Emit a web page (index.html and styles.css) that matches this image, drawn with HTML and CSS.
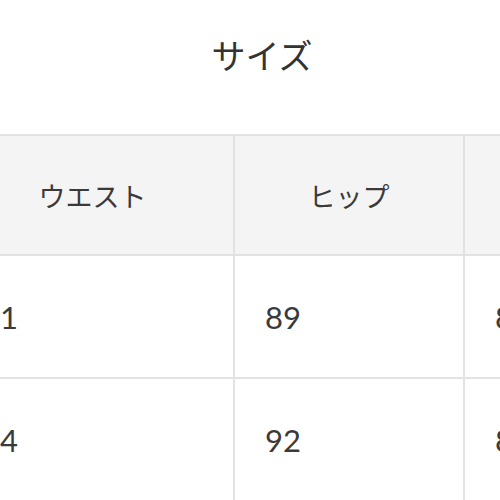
FILE: index.html
```html
<!DOCTYPE html>
<html lang="ja">
<head>
<meta charset="utf-8">
<link rel="stylesheet" href="styles.css">
</head>
<body>
<div class="page">
  <h2 class="title">サイズ</h2>
  <div class="table">
    <div class="cell head">ウエスト</div>
    <div class="cell head">ヒップ</div>
    <div class="cell head">股下</div>
    <div class="cell">71</div>
    <div class="cell">89</div>
    <div class="cell">80</div>
    <div class="cell">74</div>
    <div class="cell">92</div>
    <div class="cell">81</div>
  </div>
</div>
</body>
</html>
```
FILE: styles.css
```css
html, body {
  margin: 0;
  padding: 0;
  background: #fff;
}
body {
  width: 500px;
  height: 500px;
  overflow: hidden;
  font-family: Lato, "Noto Sans CJK JP", sans-serif;
  color: #3a3a3a;
}
.page {
  display: flex;
  flex-direction: column;
}
.title {
  margin: 0;
  height: 134px;
  box-sizing: border-box;
  padding: 31px 0 0 24px;
  text-align: center;
  font-family: "Noto Sans CJK JP", sans-serif;
  font-weight: 400;
  font-size: 34px;
  line-height: 48px;
  color: #333;
}
.table {
  display: grid;
  grid-template-columns: 281px 228px 228px;
  grid-auto-rows: 118px 121px 121px;
  gap: 2px;
  padding: 2px 2px 0 2px;
  margin-left: -50px;
  width: max-content;
  background: #e2e2e2;
}
.cell {
  background: #fff;
  display: flex;
  align-items: center;
  padding-left: 30px;
  font-size: 31px;
  white-space: nowrap;
}
.head {
  background: #f4f4f4;
  justify-content: center;
  padding-left: 0;
  font-family: "Noto Sans CJK JP", sans-serif;
  font-size: 27px;
}
```
